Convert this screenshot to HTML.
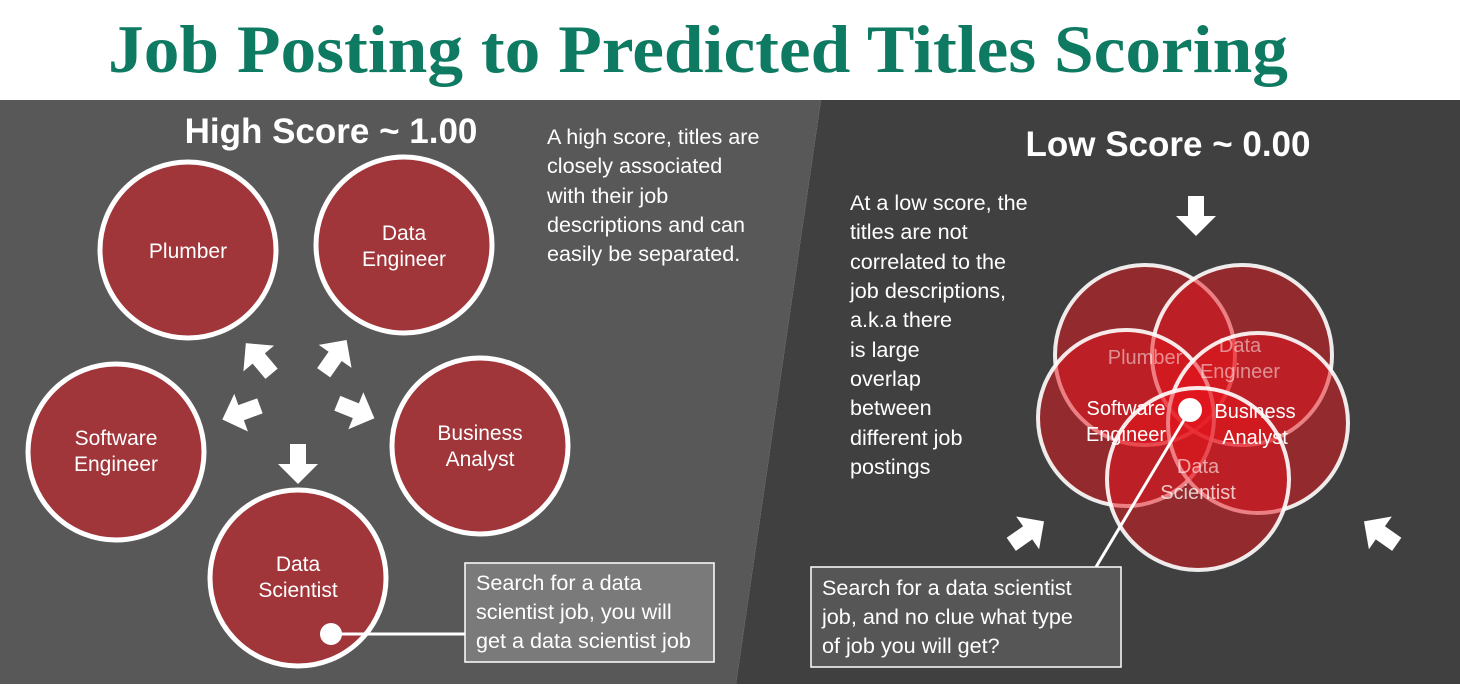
<!DOCTYPE html>
<html><head><meta charset="utf-8"><style>
html,body{margin:0;padding:0;background:#fff;width:1460px;height:699px;overflow:hidden}
svg{display:block}
.s{font-family:"Liberation Sans",sans-serif;fill:#fff}
.c{font-family:"Liberation Sans",sans-serif;fill:#fff}
</style></head><body>
<svg width="1460" height="699" viewBox="0 0 1460 699">
<defs><polygon id="ar" points="0,-22 20,-2 8,-2 8,18 -8,18 -8,-2 -20,-2" fill="#fff"/></defs>
<rect width="1460" height="699" fill="#fff"/>
<text x="698" y="72" text-anchor="middle" font-family="Liberation Serif,serif" font-weight="bold" font-size="68" fill="#0e7a62" textLength="1180" lengthAdjust="spacingAndGlyphs">Job Posting to Predicted Titles Scoring</text>
<polygon points="0,100 821,100 736,684 0,684" fill="#585858"/>
<polygon points="821,100 1460,100 1460,684 736,684" fill="#404040"/>

<text x="331" y="143" text-anchor="middle" class="s" font-weight="bold" font-size="35">High Score ~ 1.00</text>
<text x="1168" y="156" text-anchor="middle" class="s" font-weight="bold" font-size="35">Low Score ~ 0.00</text>

<g class="c" font-size="21.6">
<text x="547" y="144">A high score, titles are</text>
<text x="547" y="173">closely associated</text>
<text x="547" y="203">with their job</text>
<text x="547" y="232">descriptions and can</text>
<text x="547" y="261">easily be separated.</text>
</g>
<g class="c" font-size="21.6">
<text x="850" y="210">At a low score, the</text>
<text x="850" y="239">titles are not</text>
<text x="850" y="269">correlated to the</text>
<text x="850" y="298">job descriptions,</text>
<text x="850" y="327">a.k.a there</text>
<text x="850" y="357">is large</text>
<text x="850" y="386">overlap</text>
<text x="850" y="415">between</text>
<text x="850" y="445">different job</text>
<text x="850" y="474">postings</text>
</g>

<g fill="#a0353a" stroke="#fff" stroke-width="5">
<circle cx="188" cy="250" r="88"/>
<circle cx="404" cy="245" r="88"/>
<circle cx="116" cy="452" r="88"/>
<circle cx="480" cy="446" r="88"/>
<circle cx="298" cy="578" r="88"/>
</g>
<g class="s" font-size="21" text-anchor="middle">
<text x="188" y="258">Plumber</text>
<text x="404" y="240">Data</text><text x="404" y="266">Engineer</text>
<text x="116" y="445">Software</text><text x="116" y="471">Engineer</text>
<text x="480" y="440">Business</text><text x="480" y="466">Analyst</text>
<text x="298" y="571">Data</text><text x="298" y="597">Scientist</text>
</g>
<use href="#ar" transform="translate(260,360) rotate(-40)"/>
<use href="#ar" transform="translate(334,358) rotate(35)"/>
<use href="#ar" transform="translate(243,412) rotate(-110)"/>
<use href="#ar" transform="translate(354,410) rotate(112)"/>
<use href="#ar" transform="translate(298,462) rotate(180)"/>
<use href="#ar" transform="translate(1196,214) rotate(180)"/>
<use href="#ar" transform="translate(1026,534) rotate(55)"/>
<use href="#ar" transform="translate(1382,534) rotate(-55)"/>

<circle cx="331" cy="634" r="11" fill="#fff"/>
<line x1="331" y1="634" x2="465" y2="634" stroke="#fff" stroke-width="3"/>
<rect x="465" y="563" width="249" height="99" fill="#7a7a7a" stroke="#fff" stroke-width="1.5"/>
<g class="c" font-size="21.6">
<text x="476" y="590">Search for a data</text>
<text x="476" y="619">scientist job, you will</text>
<text x="476" y="648">get a data scientist job</text>
</g>

<g fill="rgba(230,20,28,0.5)" stroke="rgba(255,255,255,0.9)" stroke-width="4">
<circle cx="1145" cy="355" r="90"/>
<circle cx="1242" cy="355" r="90"/>
<circle cx="1126" cy="418" r="88"/>
<circle cx="1258" cy="423" r="90"/>
<circle cx="1198" cy="479" r="91"/>
</g>
<g font-family="Liberation Sans,sans-serif" font-size="20" text-anchor="middle">
<text x="1145" y="364" fill="rgba(255,255,255,0.5)">Plumber</text>
<text x="1240" y="352" fill="rgba(255,255,255,0.5)">Data</text><text x="1240" y="378" fill="rgba(255,255,255,0.5)">Engineer</text>
<text x="1198" y="473" fill="rgba(255,255,255,0.6)">Data</text><text x="1198" y="499" fill="rgba(255,255,255,0.75)">Scientist</text>
<text x="1126" y="415" fill="#fff">Software</text><text x="1126" y="441" fill="#fff">Engineer</text>
<text x="1255" y="418" fill="#fff">Business</text><text x="1255" y="444" fill="#fff">Analyst</text>
</g>
<circle cx="1190" cy="410" r="12" fill="#fff"/>
<line x1="1190" y1="410" x2="1096" y2="567" stroke="#fff" stroke-width="3"/>
<rect x="811" y="567" width="310" height="100" fill="#565656" stroke="#fff" stroke-width="1.5"/>
<g class="c" font-size="21.6">
<text x="822" y="595">Search for a data scientist</text>
<text x="822" y="624">job, and no clue what type</text>
<text x="822" y="653">of job you will get?</text>
</g>
</svg>
</body></html>
